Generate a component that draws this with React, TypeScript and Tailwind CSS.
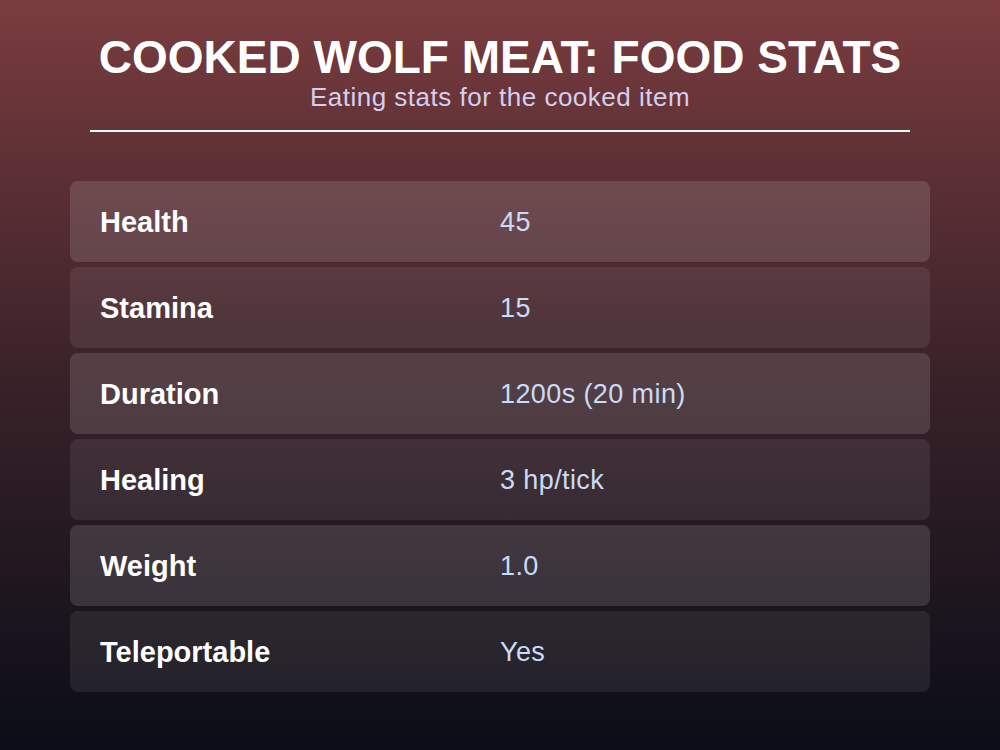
import React from "react";

const rows: [string, string][] = [
  ["Health", "45"],
  ["Stamina", "15"],
  ["Duration", "1200s (20 min)"],
  ["Healing", "3 hp/tick"],
  ["Weight", "1.0"],
  ["Teleportable", "Yes"],
];

export default function App() {
  return (
    <div
      className="w-[1000px] h-[750px] overflow-hidden bg-gradient-to-b from-[#7b3c3f] via-[#3a2229] to-[#0a0d17] px-[70px] pt-[32px]"
      style={{ fontFamily: '"Liberation Sans", Arial, sans-serif' }}
    >
      <div className="flex flex-col items-center">
        <h1 className="text-[46px] leading-[50px] font-bold text-white">
          COOKED WOLF MEAT: FOOD STATS
        </h1>
        <p className="text-[26px] leading-[31px] tracking-[0.5px] text-[#d3cfee]">
          Eating stats for the cooked item
        </p>
      </div>
      <div className="mx-[20px] mt-[17px] h-[2px] bg-white" />
      <div className="mt-[49px] flex flex-col gap-[5px]">
        {rows.map(([k, v], i) => (
          <div
            key={k}
            className={
              "h-[81px] rounded-[8px] px-[30px] pt-[2px] grid grid-cols-2 items-center " +
              (i % 2 === 0 ? "bg-white/[0.13]" : "bg-white/[0.08]")
            }
          >
            <span className="text-[29px] font-bold text-white">{k}</span>
            <span className="text-[27px] tracking-[0.4px] text-[#c9dcf6]">{v}</span>
          </div>
        ))}
      </div>
    </div>
  );
}
